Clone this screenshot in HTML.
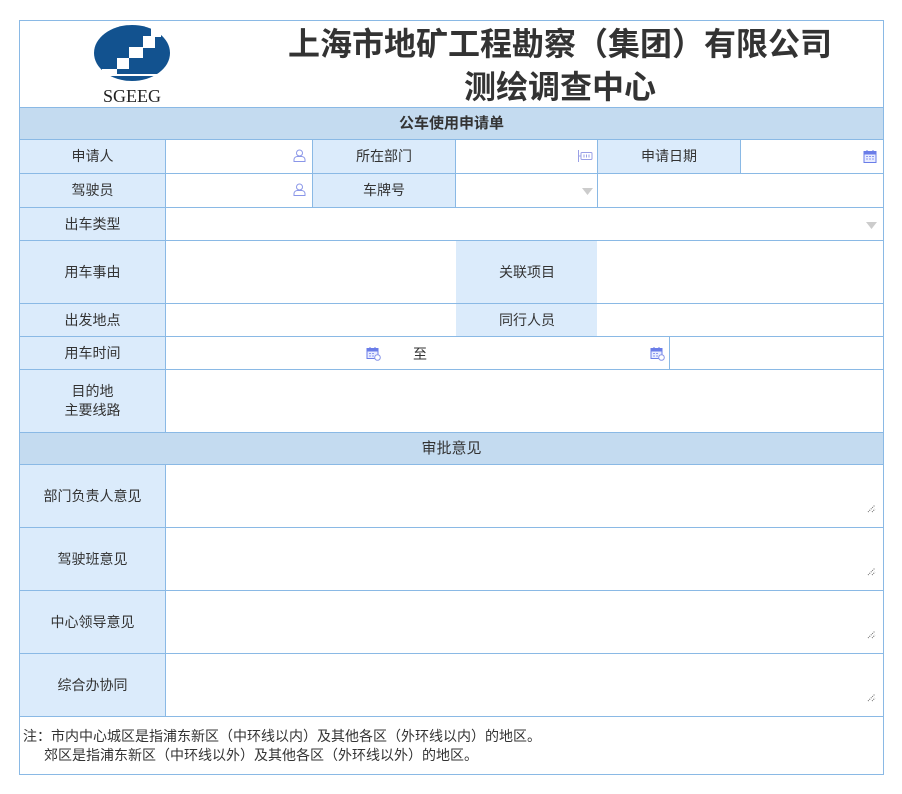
<!DOCTYPE html>
<html><head><meta charset="utf-8">
<style>
body{margin:0;background:#fff;width:902px;height:794px;position:relative;overflow:hidden;font-family:"Liberation Sans","Noto Sans CJK SC",sans-serif;font-size:14px;color:#333}
.c{position:absolute;box-sizing:border-box;border:1px solid #8ab9e5;display:flex;align-items:center;justify-content:center;text-align:center;line-height:19px}
.l{background:#dbebfb}
.h{background:#c4dbf0;font-size:15px}
.w{background:#fff}
.ic{position:absolute}
</style></head><body>
<div class="c w" style="left:19px;top:20px;width:865px;height:88px"></div>
<svg style="position:absolute;left:90px;top:22px" width="84" height="62" viewBox="0 0 84 62">
<ellipse cx="42" cy="31" rx="38" ry="28" fill="#12528f"/>
<rect x="61" y="3" width="10" height="12" fill="#fff"/>
<rect x="53" y="14" width="12" height="12" fill="#fff"/>
<rect x="39" y="25" width="14" height="11" fill="#fff"/>
<rect x="27" y="36" width="12" height="11" fill="#fff"/>
<rect x="12" y="47" width="15" height="7" fill="#fff"/>
<rect x="10" y="52" width="68" height="2" fill="#fff"/>
</svg>
<div style="position:absolute;left:92px;top:86px;width:80px;text-align:center;font-family:'Liberation Serif',serif;font-size:18px;color:#222">SGEEG</div>
<div style="position:absolute;left:260px;top:23px;width:600px;text-align:center;font-weight:bold;font-size:32px;line-height:43px;color:#333">上海市地矿工程勘察（集团）有限公司<br>测绘调查中心</div>

<div class="c h" style="left:19px;top:107px;width:865px;height:33px;font-weight:bold">公车使用申请单</div>

<div class="c l" style="left:19px;top:139px;width:147px;height:35px">申请人</div>
<div class="c w" style="left:165px;top:139px;width:148px;height:35px"></div>
<div class="c l" style="left:312px;top:139px;width:144px;height:35px">所在部门</div>
<div class="c w" style="left:455px;top:139px;width:143px;height:35px"></div>
<div class="c l" style="left:597px;top:139px;width:144px;height:35px">申请日期</div>
<div class="c w" style="left:740px;top:139px;width:144px;height:35px"></div>

<div class="c l" style="left:19px;top:173px;width:147px;height:35px">驾驶员</div>
<div class="c w" style="left:165px;top:173px;width:148px;height:35px"></div>
<div class="c l" style="left:312px;top:173px;width:144px;height:35px">车牌号</div>
<div class="c w" style="left:455px;top:173px;width:143px;height:35px"></div>
<div class="c w" style="left:597px;top:173px;width:287px;height:35px"></div>

<div class="c l" style="left:19px;top:207px;width:147px;height:34px">出车类型</div>
<div class="c w" style="left:165px;top:207px;width:719px;height:34px"></div>

<div class="c l" style="left:19px;top:240px;width:147px;height:64px">用车事由</div>
<div class="c w" style="left:165px;top:240px;width:291px;height:64px;border-right:none"></div>
<div class="c l" style="left:456px;top:240px;width:142px;height:64px;border-left:none;border-right:none">关联项目</div>
<div class="c w" style="left:597px;top:240px;width:287px;height:64px;border-left:none"></div>

<div class="c l" style="left:19px;top:303px;width:147px;height:34px">出发地点</div>
<div class="c w" style="left:165px;top:303px;width:291px;height:34px;border-right:none"></div>
<div class="c l" style="left:456px;top:303px;width:142px;height:34px;border-left:none;border-right:none">同行人员</div>
<div class="c w" style="left:597px;top:303px;width:287px;height:34px;border-left:none"></div>

<div class="c l" style="left:19px;top:336px;width:147px;height:34px">用车时间</div>
<div class="c w" style="left:165px;top:336px;width:505px;height:34px"></div>
<div style="position:absolute;left:413px;top:344px">至</div>
<div class="c w" style="left:669px;top:336px;width:215px;height:34px"></div>

<div class="c l" style="left:19px;top:369px;width:147px;height:64px">目的地<br>主要线路</div>
<div class="c w" style="left:165px;top:369px;width:719px;height:64px"></div>

<div class="c h" style="left:19px;top:432px;width:865px;height:33px">审批意见</div>

<div class="c l" style="left:19px;top:464px;width:147px;height:64px">部门负责人意见</div>
<div class="c w" style="left:165px;top:464px;width:719px;height:64px"></div>
<div class="c l" style="left:19px;top:527px;width:147px;height:64px">驾驶班意见</div>
<div class="c w" style="left:165px;top:527px;width:719px;height:64px"></div>
<div class="c l" style="left:19px;top:590px;width:147px;height:64px">中心领导意见</div>
<div class="c w" style="left:165px;top:590px;width:719px;height:64px"></div>
<div class="c l" style="left:19px;top:653px;width:147px;height:64px">综合办协同</div>
<div class="c w" style="left:165px;top:653px;width:719px;height:64px"></div>

<div class="c w" style="left:19px;top:716px;width:865px;height:59px;display:block;text-align:left;padding:10px 0 0 3px;line-height:19px">注：市内中心城区是指浦东新区（中环线以内）及其他各区（外环线以内）的地区。<br>&emsp;&ensp;郊区是指浦东新区（中环线以外）及其他各区（外环线以外）的地区。</div>

<svg class="ic" style="left:293px;top:149px" width="13" height="13" viewBox="0 0 13 13" fill="none" stroke="#8a96e8" stroke-width="1"><circle cx="6.5" cy="4" r="3"/><path d="M1 12.5v-2c0-2 2-3 3.5-3h4c1.5 0 3.5 1 3.5 3v2z"/></svg>
<svg class="ic" style="left:293px;top:183px" width="13" height="13" viewBox="0 0 13 13" fill="none" stroke="#8a96e8" stroke-width="1"><circle cx="6.5" cy="4" r="3"/><path d="M1 12.5v-2c0-2 2-3 3.5-3h4c1.5 0 3.5 1 3.5 3v2z"/></svg>
<svg class="ic" style="left:578px;top:150px" width="15" height="12" viewBox="0 0 15 12" fill="none" stroke="#9aa0e6" stroke-width="1"><path d="M.5 0v12M.5 6h2"/><rect x="3" y="2.5" width="11" height="7" rx="1"/><path d="M6 4.5v3M8.5 4.5v3M11 4.5v3"/></svg>
<svg class="ic" style="left:582px;top:188px" width="11" height="7"><path d="M0 0h11L5.5 7z" fill="#ccc"/></svg>
<svg class="ic" style="left:866px;top:222px" width="11" height="7"><path d="M0 0h11L5.5 7z" fill="#ccc"/></svg>
<svg class="ic" style="left:863px;top:149px" width="14" height="14" viewBox="0 0 14 14"><rect x="1" y="2.5" width="12" height="11" fill="#e8ecff" stroke="#6a7de8"/><rect x="1" y="2.5" width="12" height="3" fill="#6a7de8"/><path d="M4 1v3M10 1v3" stroke="#6a7de8"/><path d="M3 7.5h2M6 7.5h2M9 7.5h2M3 10h2M6 10h2M9 10h2" stroke="#8c9af0"/></svg>
<svg class="ic" style="left:366px;top:346px" width="15" height="15" viewBox="0 0 15 15"><rect x="1" y="2.5" width="11" height="10" fill="#e8ecff" stroke="#6a7de8"/><rect x="1" y="2.5" width="11" height="3" fill="#6a7de8"/><path d="M4 1v3M9 1v3" stroke="#6a7de8"/><path d="M3 7.5h2M6 7.5h2M3 10h2M6 10h2" stroke="#8c9af0"/><circle cx="11.5" cy="11.5" r="2.8" fill="#fff" stroke="#8a96e8"/></svg>
<svg class="ic" style="left:650px;top:346px" width="15" height="15" viewBox="0 0 15 15"><rect x="1" y="2.5" width="11" height="10" fill="#e8ecff" stroke="#6a7de8"/><rect x="1" y="2.5" width="11" height="3" fill="#6a7de8"/><path d="M4 1v3M9 1v3" stroke="#6a7de8"/><path d="M3 7.5h2M6 7.5h2M3 10h2M6 10h2" stroke="#8c9af0"/><circle cx="11.5" cy="11.5" r="2.8" fill="#fff" stroke="#8a96e8"/></svg>

<svg class="ic" style="left:867px;top:504px" width="9" height="9"><path d="M1 8L8 1M5 8L8 5" stroke="#666" stroke-dasharray="1 1"/></svg>
<svg class="ic" style="left:867px;top:567px" width="9" height="9"><path d="M1 8L8 1M5 8L8 5" stroke="#666" stroke-dasharray="1 1"/></svg>
<svg class="ic" style="left:867px;top:630px" width="9" height="9"><path d="M1 8L8 1M5 8L8 5" stroke="#666" stroke-dasharray="1 1"/></svg>
<svg class="ic" style="left:867px;top:693px" width="9" height="9"><path d="M1 8L8 1M5 8L8 5" stroke="#666" stroke-dasharray="1 1"/></svg>
</body></html>
